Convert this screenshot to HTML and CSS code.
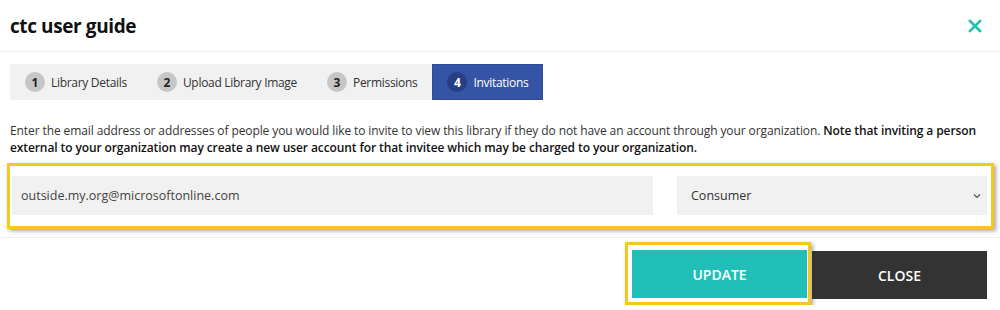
FILE: index.html
```html
<!DOCTYPE html>
<html lang="en">
<head>
  <meta charset="UTF-8">
  <meta name="viewport" content="width=device-width, initial-scale=1.0">
  <title>ctc user guide</title>
  <link rel="stylesheet" href="styles.css">
</head>
<body>
  <div class="modal">
    <div class="modal-header">
      <h2 class="modal-title">ctc user guide</h2>
      <button class="close-x" aria-label="Close">
        <svg width="14" height="14" viewBox="0 0 14 14">
          <path d="M2 2 L12 12 M12 2 L2 12" stroke="#1fbfb6" stroke-width="2.6" stroke-linecap="square" fill="none"/>
        </svg>
      </button>
    </div>

    <div class="modal-body">
      <ul class="steps">
        <li class="step"><span class="step-num">1</span>Library Details</li>
        <li class="step"><span class="step-num">2</span>Upload Library Image</li>
        <li class="step"><span class="step-num">3</span>Permissions</li>
        <li class="step active"><span class="step-num">4</span>Invitations</li>
      </ul>

      <p class="note">
        Enter the email address or addresses of people you would like to invite to view this library if they do not have an account through your organization.
        <strong>Note that inviting a person external to your organization may create a new user account for that invitee which may be charged to your organization.</strong>
      </p>

      <div class="invite-row highlight">
        <input class="field email" type="text" value="outside.my.org@microsoftonline.com">
        <div class="field role">
          <span>Consumer</span>
          <svg width="8" height="6" viewBox="0 0 8 6">
            <path d="M1 1.5 L4 4.5 L7 1.5" stroke="#555" stroke-width="1.2" fill="none"/>
          </svg>
        </div>
      </div>
    </div>

    <div class="modal-footer">
      <div class="highlight btn-wrap">
        <button class="btn btn-update">UPDATE</button>
      </div>
      <button class="btn btn-close">CLOSE</button>
    </div>
  </div>
</body>
</html>
```

FILE: styles.css
```css
body {
  margin: 0;
  background: #fff;
  font-family: "Open Sans", "Liberation Sans", sans-serif;
  color: #333;
}

.modal {
  width: 1000px;
}

.modal-header {
  display: flex;
  align-items: center;
  justify-content: space-between;
  height: 51px;
  padding: 0 18px 0 10px;
  border-bottom: 1px solid #f0f0f0;
}

.modal-title {
  margin: 0;
  font-size: 19px;
  font-weight: 700;
  color: #111;
  letter-spacing: -0.4px;
}

.close-x {
  border: 0;
  background: none;
  padding: 0;
  display: flex;
  margin-top: 1px;
}

.modal-body {
  padding: 12px 13px 0 10px;
}

.steps {
  list-style: none;
  margin: 0;
  padding: 0;
  display: inline-flex;
  background: #f1f1f1;
  height: 36px;
}

.step {
  display: flex;
  align-items: center;
  gap: 6px;
  padding: 0 15px;
  font-size: 12px;
  letter-spacing: -0.3px;
  color: #333;
}

.step-num {
  width: 20px;
  height: 20px;
  border-radius: 50%;
  background: #c6c6c6;
  color: #222;
  font-size: 12px;
  font-weight: 700;
  letter-spacing: 0;
  display: flex;
  align-items: center;
  justify-content: center;
}

.step.active {
  background: #3654a6;
  color: #fff;
  box-shadow: inset 0 0 0 1px #2f4c9c;
}

.step.active .step-num {
  background: #263f84;
  color: #fff;
}

.note {
  margin: 22px 0 7px;
  font-size: 12px;
  line-height: 17px;
  letter-spacing: -0.1px;
  color: #333;
}

.note strong {
  font-weight: 600;
  color: #111;
}

.highlight {
  border: 3px solid #f8c71d;
  box-shadow: 2px 2px 4px rgba(0, 0, 0, 0.35);
}

.invite-row {
  display: flex;
  gap: 24px;
  margin-left: -3px;
  margin-right: -7px;
  padding: 10px 4px 11px 2px;
}

.field {
  height: 39px;
  box-sizing: border-box;
  background: #f1f1f1;
  border: 0;
  font-family: inherit;
  font-size: 12.5px;
}

.email {
  width: 641px;
  padding: 0 9px;
  color: #444;
  outline: none;
}

.role {
  flex: 1;
  display: flex;
  align-items: center;
  justify-content: space-between;
  padding: 0 6px 0 14px;
  color: #333;
}

.modal-footer {
  display: flex;
  justify-content: flex-end;
  align-items: flex-start;
  gap: 1px;
  margin-top: 8px;
  padding: 4px 13px 0 0;
  border-top: 1px solid #f0f0f0;
}

.btn-wrap {
  padding: 5px 1px 4px 4px;
}

.btn {
  width: 175px;
  height: 48px;
  border: 0;
  color: #fff;
  font-family: inherit;
  font-size: 14px;
  font-weight: 600;
}

.btn-update {
  display: block;
  background: #22bfb9;
}

.btn-close {
  background: #333;
  margin-top: 9px;
}
```
